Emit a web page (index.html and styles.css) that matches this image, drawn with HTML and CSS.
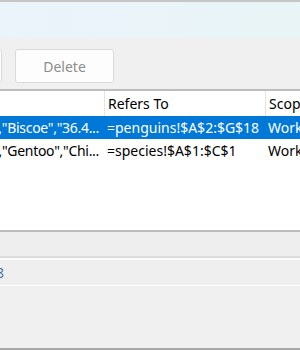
FILE: index.html
```html
<!DOCTYPE html>
<html lang="en">
<head>
    <meta charset="UTF-8">
    <title>Name Manager</title>
    <link rel="stylesheet" href="styles.css">
</head>
<body>
    <div class="window">
        <div class="banner"></div>

        <div class="toolbar">
            <button class="btn btn-cut">Edit...</button>
            <button class="btn" disabled>Delete</button>
        </div>

        <div class="grid">
            <div class="row head">
                <div class="cell c1"></div>
                <div class="cell c2">Refers To</div>
                <div class="cell c3">Scope</div>
            </div>
            <div class="row selected">
                <div class="cell c1"><span>"Adelie","Biscoe","36.4...</span></div>
                <div class="cell c2">=penguins!$A$2:$G$18</div>
                <div class="cell c3">Workbook</div>
            </div>
            <div class="row">
                <div class="cell c1"><span>"Adelie","Gentoo","Chi...</span></div>
                <div class="cell c2">=species!$A$1:$C$1</div>
                <div class="cell c3">Workbook</div>
            </div>
        </div>

        <div class="comment"></div>

        <div class="refers">
            <span class="ref-text">$18</span>
        </div>

        <div class="footer"></div>
    </div>
</body>
</html>
```

FILE: styles.css
```css
body {
    margin: 0;
    font-family: "Noto Sans", "Open Sans", sans-serif;
    font-size: 14px;
    background-color: #f0f0f0;
}

.window {
    width: 300px;
    height: 350px;
    display: flex;
    flex-direction: column;
    overflow: hidden;
    border-top: 2px solid #c6c6c6;
    border-bottom: 2px solid #a8a8a8;
    box-sizing: border-box;
}

.banner {
    height: 36px;
    background: linear-gradient(90deg, #ebf3fb, #e8f4f6);
}

.toolbar {
    height: 51px;
    display: flex;
    gap: 13px;
    padding-top: 11px;
    box-sizing: border-box;
}

.btn {
    width: 99px;
    height: 34px;
    background: #fdfdfd;
    border: 1px solid #dadada;
    border-radius: 3px;
    font-family: inherit;
    font-size: 14px;
    color: #000;
}

.btn:disabled {
    color: #8c8c8c;
}

.btn-cut {
    margin-left: -97px;
}

.grid {
    height: 139px;
    background: #fff;
    border-top: 2px solid #bdbdbd;
    border-bottom: 2px solid #bcbcbc;
}

.row {
    display: flex;
    height: 23px;
    align-items: center;
}

.row.head {
    height: 25px;
}

.row.selected {
    background: #0078d7;
    color: #fff;
}

.cell {
    height: 100%;
    display: flex;
    align-items: center;
    white-space: nowrap;
    overflow: hidden;
    box-sizing: border-box;
}

.c1 {
    width: 104px;
    justify-content: flex-end;
    padding-right: 5px;
    letter-spacing: -0.3px;
}

.c2 {
    width: 161px;
    padding-left: 3px;
}

.c3 {
    flex: 1;
    padding-left: 3px;
}

.head .c2,
.head .c3 {
    border-left: 1px solid #e5e5e5;
}

.comment {
    height: 24px;
    background: #eeeeee;
    border-bottom: 2px solid #dcdcdc;
}

.refers {
    height: 25px;
    background: #efefef;
    border-top: 2px solid #fafafa;
    border-bottom: 1px solid #ffffff;
    display: flex;
    align-items: center;
    overflow: hidden;
}

.ref-text {
    margin-left: -20px;
    color: #4a6fa5;
}

.footer {
    flex: 1;
    background: #f0f0f0;
}
```
